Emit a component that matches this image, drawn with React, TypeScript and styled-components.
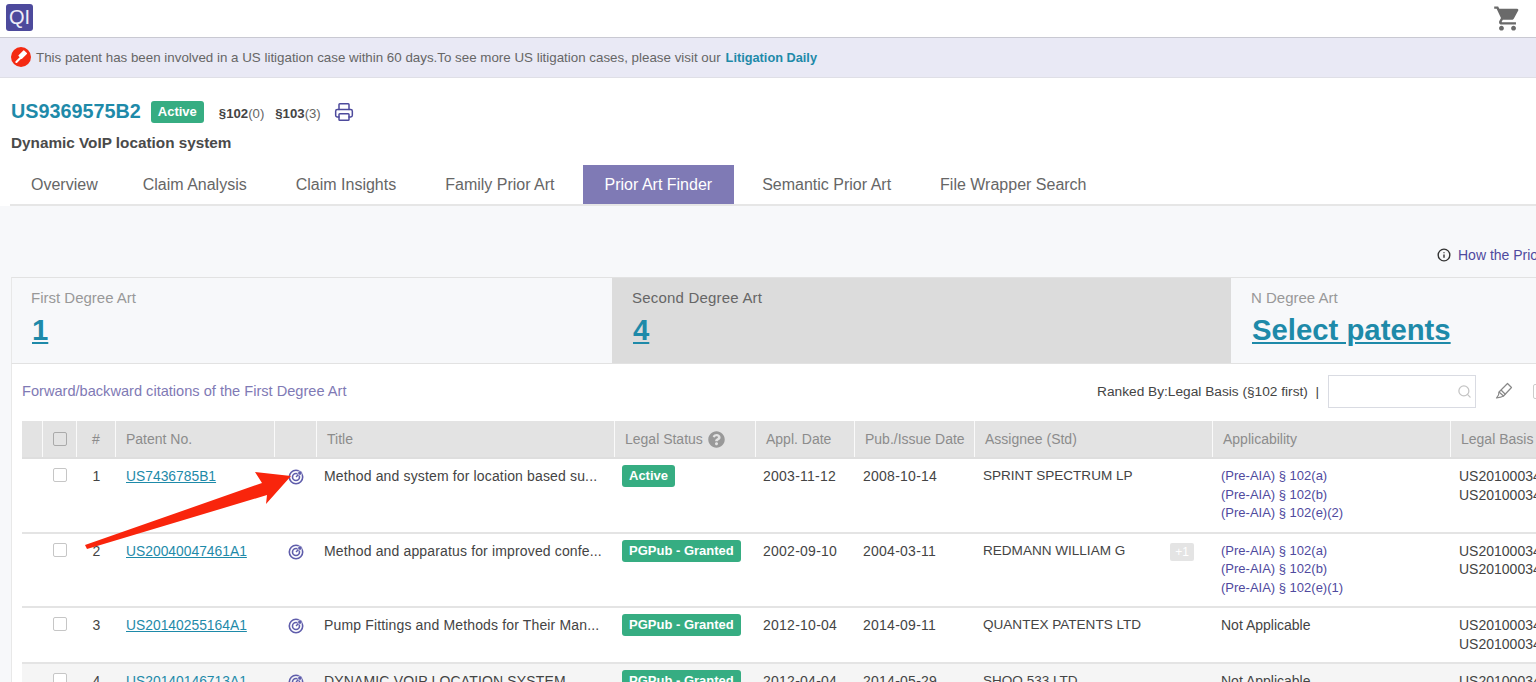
import React from 'react';
import styled, { createGlobalStyle } from 'styled-components';
import { Info, Printer, Search } from 'lucide-react';
import { FaQuestionCircle } from 'react-icons/fa';
import { MdShoppingCart } from 'react-icons/md';

const GlobalStyle = createGlobalStyle`
  html, body {
    margin: 0;
    height: 100%;
    overflow: hidden;
    background: #fff;
  }
  * { box-sizing: border-box; }
  body {
    font-family: "Liberation Sans", Arial, sans-serif;
    font-size: 13px;
    color: #444;
  }
`;

const Page = styled.div`
  position: relative;
  width: 1536px;
  height: 682px;
  overflow: hidden;
  display: flex;
  flex-direction: column;
`;

const TopBar = styled.header`
  height: 38px;
  flex-shrink: 0;
  display: flex;
  align-items: flex-start;
  justify-content: space-between;
  padding: 4px 14px 0 6px;
  border-bottom: 1px solid #c9c9d2;
`;

const Logo = styled.div`
  width: 27px;
  height: 27px;
  border-radius: 3px;
  background: #4d4a9c;
  color: #eeeef8;
  font-size: 20px;
  line-height: 27px;
  text-align: center;
`;

const Banner = styled.div`
  height: 40px;
  flex-shrink: 0;
  display: flex;
  align-items: center;
  gap: 5px;
  padding: 0 0 1px 11px;
  background: #e9e9f5;
  border-bottom: 1px solid #dfdfe6;
  color: #666;
  font-size: 13.35px;
  white-space: nowrap;
`;

const GavelDot = styled.span`
  width: 20px;
  height: 20px;
  border-radius: 50%;
  background: #f42a12;
  display: flex;
  align-items: center;
  justify-content: center;
`;

const BannerLink = styled.a`
  color: #1e8aa9;
  font-size: 12.75px;
  font-weight: 700;
`;

const PatentHead = styled.div`
  flex-shrink: 0;
  padding: 22px 0 0 11px;
  height: 87px;
`;

const TitleRow = styled.div`
  display: flex;
  align-items: center;
  height: 23px;
`;

const PatentNumber = styled.div`
  color: #1e8aa9;
  font-size: 19.8px;
  font-weight: 700;
  margin-right: 10px;
`;

const StatusBadge = styled.span`
  display: inline-block;
  height: 22px;
  line-height: 22px;
  padding: 0 7px;
  border-radius: 3px;
  background: #36ad82;
  color: #fff;
  font-size: 13px;
  font-weight: 700;
  white-space: nowrap;
`;

const RowBadge = styled(StatusBadge)`
  display: block;
  width: fit-content;
  margin-top: -2px;
`;

const Section = styled.span`
  margin-left: 15px;
  font-size: 13.2px;
  color: #666;
  padding-top: 3px;
  b { color: #444; }
  & + & { margin-left: 11px; }
`;

const PrintButton = styled.span`
  display: flex;
  margin-left: 13px;
  color: #4d4a9c;
`;

const Subtitle = styled.div`
  margin-top: 11px;
  font-size: 15.3px;
  font-weight: 700;
  color: #4a4a4a;
`;

const Tabs = styled.nav`
  flex-shrink: 0;
  height: 41px;
  margin-left: 10px;
  display: flex;
  gap: 7px;
  border-bottom: 2px solid #e6e6e6;
`;

const Tab = styled.div<{ $active?: boolean }>`
  height: 39px;
  line-height: 40px;
  padding: 0 ${({ $active }) => ($active ? 22 : 21)}px;
  font-size: 16px;
  color: ${({ $active }) => ($active ? '#fff' : '#666')};
  background: ${({ $active }) => ($active ? '#7f7ab5' : 'transparent')};
  &:first-child { margin-right: -4px; }
`;

const Panel = styled.main`
  flex: 1;
  min-height: 0;
  background: #f7f8fa;
  padding-left: 11px;
  display: flex;
  flex-direction: column;
`;

const HowLink = styled.div`
  height: 71px;
  flex-shrink: 0;
  padding: 41px 0 0 1426px;
  display: flex;
  align-items: flex-start;
  gap: 7px;
  white-space: nowrap;
  color: #4f4a9e;
  font-size: 14px;
  svg { color: #333; flex-shrink: 0; margin-top: 1px; }
`;

const DegreeRow = styled.div`
  flex-shrink: 0;
  height: 87px;
  display: grid;
  grid-template-columns: 600px 619px 1fr;
  border-top: 1px solid #e2e2e2;
  border-left: 1px solid #e8e8e8;
  border-bottom: 1px solid #e2e2e2;
`;

const DegreeCard = styled.div<{ $active?: boolean }>`
  padding: 12px 19px 0;
  background: ${({ $active }) => ($active ? '#dcdcdc' : '#f7f8fa')};
  & + & { padding-left: 20px; }
`;

const DegreeLabel = styled.div<{ $active?: boolean }>`
  font-size: 15px;
  line-height: 16px;
  letter-spacing: ${({ $active }) => ($active ? '0.2px' : '0')};
  color: ${({ $active }) => ($active ? '#666' : '#999')};
`;

const DegreeValue = styled.a`
  display: inline-block;
  margin: 6px 0 0 1px;
  font-size: 29.3px;
  line-height: 36px;
  font-weight: 700;
  color: #1e8aa9;
  text-decoration: underline;
`;

const ResultCard = styled.section`
  flex: 1;
  min-height: 0;
  background: #fff;
  border-left: 1px solid #e8e8e8;
  padding-left: 10px;
`;

const Toolbar = styled.div`
  height: 57px;
  padding-bottom: 3px;
  display: flex;
  align-items: center;
  justify-content: space-between;
`;

const ToolbarNote = styled.div`
  color: #7f7ab5;
  font-size: 14.6px;
`;

const ToolbarTools = styled.div`
  display: flex;
  align-items: center;
  color: #444;
  font-size: 13.7px;
`;

const SearchBox = styled.div`
  width: 148px;
  height: 33px;
  margin-left: 9px;
  border: 1px solid #d9dbe2;
  display: flex;
  align-items: center;
  justify-content: flex-end;
  padding-right: 3px;
  color: #c4c4c4;
`;

const ToolIcon = styled.span`
  display: flex;
  margin-left: 19px;
  color: #888;
`;

const ClippedBox = styled.span`
  width: 14px;
  height: 15px;
  margin-left: 20px;
  margin-right: -11px;
  border: 1px solid #ccc;
  border-radius: 2px;
  flex-shrink: 0;
`;

const columns = '21px 34px 39px 159px 42px 298px 141px 99px 120px 238px 238px 238px';

const HeadRow = styled.div`
  height: 38px;
  display: grid;
  grid-template-columns: ${columns};
  background: #e3e3e3;
  border-bottom: 2px solid #dedede;
`;

const HeadCell = styled.div<{ $center?: boolean }>`
  display: flex;
  align-items: center;
  gap: 5px;
  justify-content: ${({ $center }) => ($center ? 'center' : 'flex-start')};
  padding-left: ${({ $center }) => ($center ? 0 : 10)}px;
  border-right: 1px solid #fafafa;
  color: #8c8c8c;
  font-size: 14px;
  white-space: nowrap;
  svg { color: #999; }
`;

const BodyRow = styled.div<{ $hover?: boolean }>`
  display: grid;
  grid-template-columns: ${columns};
  padding: 8px 0 9px;
  border-bottom: 2px solid #e4e4e4;
  background: ${({ $hover }) => ($hover ? '#f5f5f5' : '#fff')};
  font-size: 14px;
  line-height: 18.5px;
  color: #444;
  white-space: nowrap;
`;

const Cell = styled.div<{ $center?: boolean; $wide?: boolean; $tight?: boolean }>`
  min-width: 0;
  padding-left: ${({ $center, $wide, $tight }) => ($center ? 0 : $wide ? 10 : $tight ? 7 : 8)}px;
  text-align: ${({ $center }) => ($center ? 'center' : 'left')};
`;

const DateCell = styled(Cell)`
  letter-spacing: 0.25px;
`;

const Checkbox = styled.span`
  display: inline-block;
  width: 14px;
  height: 14px;
  border: 1px solid #c6c6c6;
  border-radius: 2px;
  background: #fff;
  vertical-align: -1px;
`;

const HeadCheckbox = styled(Checkbox)`
  background: transparent;
  border-color: #aaa;
`;

const PatentLink = styled.a`
  color: #1e8aa9;
  font-size: 13.85px;
  text-decoration: underline;
`;

const IconCell = styled.div`
  display: flex;
  padding: 2px 0 0 13px;
  color: #5f5dab;
`;

const TitleText = styled.div`
  letter-spacing: 0.15px;
`;

const AssigneeCell = styled(Cell)`
  display: flex;
  align-items: flex-start;
  justify-content: space-between;
  padding-right: 19px;
  font-size: 13.55px;
`;

const CountTag = styled.span`
  width: 24px;
  height: 18px;
  margin-top: 1px;
  line-height: 18px;
  text-align: center;
  border-radius: 2px;
  background: #e4e4e4;
  color: #fff;
  font-size: 12px;
`;

const Basis = styled.div`
  color: #4f4a9e;
  font-size: 13px;
`;

const Arrow = styled.svg`
  position: absolute;
  left: 0;
  top: 0;
  pointer-events: none;
`;

function GavelIcon() {
  return (
    <svg width="16" height="16" viewBox="0 0 16 16" fill="#fff" stroke="none">
      <rect x="7.2" y="1.6" width="5" height="8" rx="0.6" transform="rotate(45 9.7 5.6)" />
      <path d="M7.6 7.2l1.5 1.5-5 5a1 1 0 0 1-1.5-1.5z" />
    </svg>
  );
}

function PenIcon() {
  return (
    <svg width="18" height="18" viewBox="0 0 18 18" fill="none" stroke="currentColor" strokeWidth="1.2" strokeLinejoin="round">
      <path d="M12.5 1.5l4 4-8 8.5-4.500-4z" />
      <path d="M4 10l-.5 3-2 3 4-.8 3-1.200" />
      <path d="M6 8l4.500 4.500" />
    </svg>
  );
}

function TargetIcon() {
  return (
    <svg width="16" height="16" viewBox="0 0 16 16" fill="none" stroke="currentColor">
      <circle cx="8" cy="8" r="6.7" strokeWidth="1.6" />
      <circle cx="8" cy="8" r="3.5" strokeWidth="1.6" />
      <path d="M8 8l4-4" strokeWidth="1.4" />
      <circle cx="12" cy="4" r="2.300" fill="currentColor" stroke="#fff" strokeWidth="0.7" />
    </svg>
  );
}

type Row = {
  no: string;
  title: string;
  status: string;
  appl: string;
  pub: string;
  assignee: string;
  extra?: string;
  basis: string[];
  legal: string[];
};

const rows: Row[] = [
  {
    no: 'US7436785B1',
    title: 'Method and system for location based su...',
    status: 'Active',
    appl: '2003-11-12',
    pub: '2008-10-14',
    assignee: 'SPRINT SPECTRUM LP',
    basis: ['(Pre-AIA) § 102(a)', '(Pre-AIA) § 102(b)', '(Pre-AIA) § 102(e)(2)'],
    legal: ['US20100034', 'US20100034'],
  },
  {
    no: 'US20040047461A1',
    title: 'Method and apparatus for improved confe...',
    status: 'PGPub - Granted',
    appl: '2002-09-10',
    pub: '2004-03-11',
    assignee: 'REDMANN WILLIAM G',
    extra: '+1',
    basis: ['(Pre-AIA) § 102(a)', '(Pre-AIA) § 102(b)', '(Pre-AIA) § 102(e)(1)'],
    legal: ['US20100034', 'US20100034'],
  },
  {
    no: 'US20140255164A1',
    title: 'Pump Fittings and Methods for Their Man...',
    status: 'PGPub - Granted',
    appl: '2012-10-04',
    pub: '2014-09-11',
    assignee: 'QUANTEX PATENTS LTD',
    basis: [],
    legal: ['US20100034', 'US20100034'],
  },
  {
    no: 'US20140146713A1',
    title: 'DYNAMIC VOIP LOCATION SYSTEM',
    status: 'PGPub - Granted',
    appl: '2012-04-04',
    pub: '2014-05-29',
    assignee: 'SHOO 533 LTD',
    basis: [],
    legal: ['US20100034', 'US20100034'],
  },
];

const tabs = [
  'Overview',
  'Claim Analysis',
  'Claim Insights',
  'Family Prior Art',
  'Prior Art Finder',
  'Semantic Prior Art',
  'File Wrapper Search',
];

export default function App() {
  return (
    <Page>
      <GlobalStyle />
      <TopBar>
        <Logo>QI</Logo>
        <MdShoppingCart size={29} color="#6a6a6a" />
      </TopBar>
      <Banner>
        <GavelDot>
          <GavelIcon />
        </GavelDot>
        This patent has been involved in a US litigation case within 60 days.To see more US litigation cases, please visit our
        <BannerLink>Litigation Daily</BannerLink>
      </Banner>
      <PatentHead>
        <TitleRow>
          <PatentNumber>US9369575B2</PatentNumber>
          <StatusBadge>Active</StatusBadge>
          <Section>
            <b>§102</b>(0)
          </Section>
          <Section>
            <b>§103</b>(3)
          </Section>
          <PrintButton>
            <Printer size={20} strokeWidth={1.8} />
          </PrintButton>
        </TitleRow>
        <Subtitle>Dynamic VoIP location system</Subtitle>
      </PatentHead>
      <Tabs>
        {tabs.map((tab) => (
          <Tab key={tab} $active={tab === 'Prior Art Finder'}>
            {tab}
          </Tab>
        ))}
      </Tabs>
      <Panel>
        <HowLink>
          <Info size={14} strokeWidth={2.4} />
          How the Prior Art Finder works
        </HowLink>
        <DegreeRow>
          <DegreeCard>
            <DegreeLabel>First Degree Art</DegreeLabel>
            <DegreeValue>1</DegreeValue>
          </DegreeCard>
          <DegreeCard $active>
            <DegreeLabel $active>Second Degree Art</DegreeLabel>
            <DegreeValue>4</DegreeValue>
          </DegreeCard>
          <DegreeCard>
            <DegreeLabel>N Degree Art</DegreeLabel>
            <DegreeValue>Select patents</DegreeValue>
          </DegreeCard>
        </DegreeRow>
        <ResultCard>
          <Toolbar>
            <ToolbarNote>Forward/backward citations of the First Degree Art</ToolbarNote>
            <ToolbarTools>
              Ranked By:Legal Basis (§102 first)&nbsp;&nbsp;|
              <SearchBox>
                <Search size={15} />
              </SearchBox>
              <ToolIcon>
                <PenIcon />
              </ToolIcon>
              <ClippedBox />
            </ToolbarTools>
          </Toolbar>
          <HeadRow>
            <HeadCell />
            <HeadCell $center>
              <HeadCheckbox />
            </HeadCell>
            <HeadCell $center>#</HeadCell>
            <HeadCell>Patent No.</HeadCell>
            <HeadCell />
            <HeadCell>Title</HeadCell>
            <HeadCell>
              Legal Status <FaQuestionCircle size={17} />
            </HeadCell>
            <HeadCell>Appl. Date</HeadCell>
            <HeadCell>Pub./Issue Date</HeadCell>
            <HeadCell>Assignee (Std)</HeadCell>
            <HeadCell>Applicability</HeadCell>
            <HeadCell>Legal Basis</HeadCell>
          </HeadRow>
          {rows.map((row, i) => (
            <BodyRow key={row.no} $hover={i === 3}>
              <Cell />
              <Cell $center>
                <Checkbox />
              </Cell>
              <Cell $center>{i + 1}</Cell>
              <Cell $wide>
                <PatentLink>{row.no}</PatentLink>
              </Cell>
              <IconCell>
                <TargetIcon />
              </IconCell>
              <Cell $tight>
                <TitleText>{row.title}</TitleText>
              </Cell>
              <Cell $tight>
                <RowBadge>{row.status}</RowBadge>
              </Cell>
              <DateCell $tight>{row.appl}</DateCell>
              <DateCell>{row.pub}</DateCell>
              <AssigneeCell>
                {row.assignee}
                {row.extra && <CountTag>{row.extra}</CountTag>}
              </AssigneeCell>
              <Cell>
                {row.basis.length === 0
                  ? 'Not Applicable'
                  : row.basis.map((b) => <Basis key={b}>{b}</Basis>)}
              </Cell>
              <Cell>
                {row.legal.map((l, j) => (
                  <div key={j}>{l}</div>
                ))}
              </Cell>
            </BodyRow>
          ))}
        </ResultCard>
      </Panel>
      <Arrow width="1536" height="682" viewBox="0 0 1536 682">
        <path d="M85 545 L262 483 L255 472 L291 476 L266 504 L267 495 L87 549 Z" fill="#f9250c" />
      </Arrow>
    </Page>
  );
}
